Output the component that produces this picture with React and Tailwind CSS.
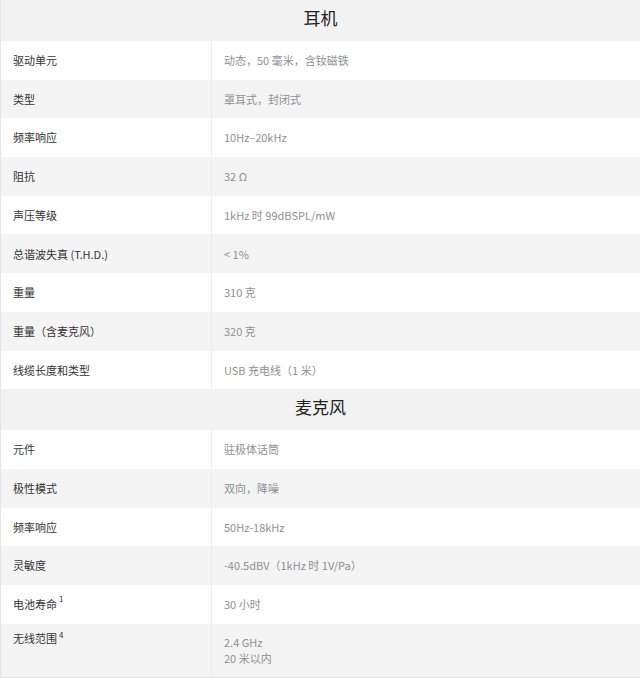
import React from 'react';

const headphones = [
  ['驱动单元', '动态，50 毫米，含钕磁铁'],
  ['类型', '罩耳式，封闭式'],
  ['频率响应', '10Hz–20kHz'],
  ['阻抗', '32 Ω'],
  ['声压等级', '1kHz 时 99dBSPL/mW'],
  ['总谐波失真 (T.H.D.)', '< 1%'],
  ['重量', '310 克'],
  ['重量（含麦克风）', '320 克'],
  ['线缆长度和类型', 'USB 充电线（1 米）'],
];

const mic = [
  ['元件', '驻极体话筒'],
  ['极性模式', '双向，降噪'],
  ['频率响应', '50Hz-18kHz'],
  ['灵敏度', '-40.5dBV（1kHz 时 1V/Pa）'],
];

const Header = ({ title }) => (
  <div className="h-[41px] flex items-center justify-center pb-[5px] bg-[#f2f2f2] text-[17px] text-[#222]">
    {title}
  </div>
);

const Row = ({ label, value, shaded }) => (
  <div className={`flex h-[38.7px] ${shaded ? 'bg-[#f4f4f4]' : 'bg-white'}`}>
    <div className="w-[211px] shrink-0 flex items-center pl-3 border-r border-[#ececec] text-[11px] text-[#333]">
      {label}
    </div>
    <div className="flex-1 flex items-center pl-3 text-[11px] text-[#909090]">{value}</div>
  </div>
);

const App = () => {
  return (
    <div
      className="w-[640px] bg-white border-l border-[#e6e6e6]"
      style={{ fontFamily: '"Noto Sans CJK SC", "Noto Sans", sans-serif' }}
    >
      <Header title="耳机" />
      {headphones.map(([l, v], i) => (
        <Row key={l + i} label={l} value={v} shaded={i % 2 === 1} />
      ))}
      <Header title="麦克风" />
      {mic.map(([l, v], i) => (
        <Row key={l + i} label={l} value={v} shaded={i % 2 === 1} />
      ))}
      <div className="flex h-[38.7px] bg-white">
        <div className="w-[211px] shrink-0 flex items-center pl-3 border-r border-[#ececec] text-[11px] text-[#333]">
          电池寿命<sup className="text-[8px] ml-[2px] -top-[5px]">1</sup>
        </div>
        <div className="flex-1 flex items-center pl-3 text-[11px] text-[#909090]">30 小时</div>
      </div>
      <div className="flex h-[54px] bg-[#f4f4f4] border-b border-[#e6e6e6]">
        <div className="w-[211px] shrink-0 pt-[6px] pl-3 border-r border-[#ececec] text-[11px] text-[#333] leading-[16px]">
          无线范围<sup className="text-[8px] ml-[2px] -top-[5px]">4</sup>
        </div>
        <div className="flex-1 pt-[10px] pl-3 text-[11px] text-[#909090] leading-[16px]">
          <div>2.4 GHz</div>
          <div>20 米以内</div>
        </div>
      </div>
    </div>
  );
};

export default App;
